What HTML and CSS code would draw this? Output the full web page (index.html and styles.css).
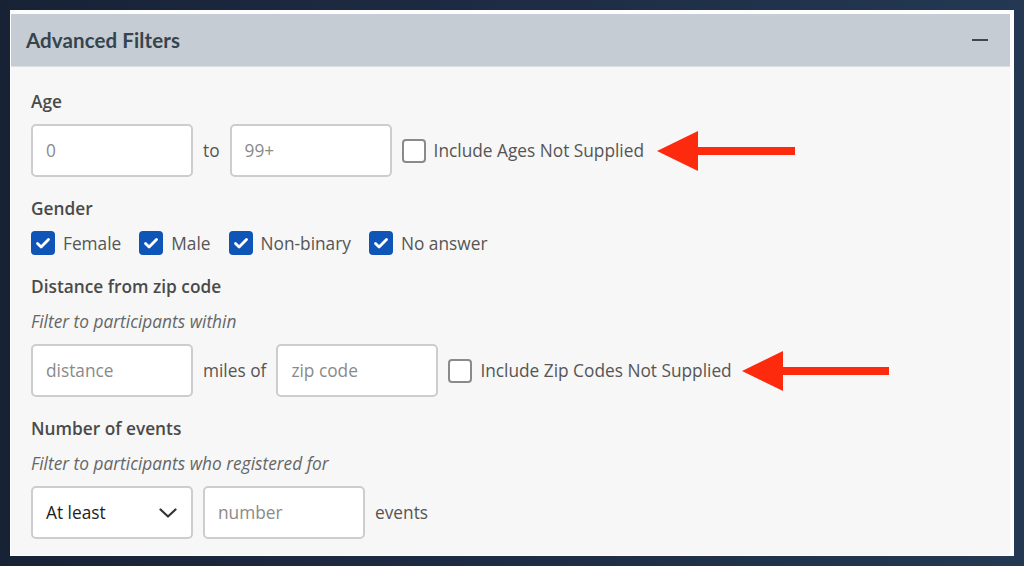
FILE: index.html
```html
<!DOCTYPE html>
<html lang="en">
<head>
  <meta charset="UTF-8">
  <title>Advanced Filters</title>
  <link rel="stylesheet" href="styles.css">
</head>
<body>
  <div class="frame">
    <div class="panel">
      <div class="panel-header">
        <h2>Advanced Filters</h2>
        <span class="collapse"></span>
      </div>
      <form class="filters">
        <div class="section">
          <div class="label">Age</div>
          <div class="row">
            <input class="field" type="text" placeholder="0">
            <span class="word">to</span>
            <input class="field" type="text" placeholder="99+">
            <label class="check">
              <span class="box"></span>
              Include Ages Not Supplied
            </label>
            <svg class="arrow" width="140" height="42" viewBox="0 0 140 42">
              <polygon points="0,21 41,1 41,41" />
              <rect x="40" y="17" width="98" height="8" />
            </svg>
          </div>
        </div>

        <div class="section">
          <div class="label">Gender</div>
          <div class="row checks">
            <label class="check"><span class="box on"><svg viewBox="0 0 24 24"><path d="M6.5 12.5l3.6 3.6 7.4-7.6" /></svg></span>Female</label>
            <label class="check"><span class="box on"><svg viewBox="0 0 24 24"><path d="M6.5 12.5l3.6 3.6 7.4-7.6" /></svg></span>Male</label>
            <label class="check"><span class="box on"><svg viewBox="0 0 24 24"><path d="M6.5 12.5l3.6 3.6 7.4-7.6" /></svg></span>Non-binary</label>
            <label class="check"><span class="box on"><svg viewBox="0 0 24 24"><path d="M6.5 12.5l3.6 3.6 7.4-7.6" /></svg></span>No answer</label>
          </div>
        </div>

        <div class="section">
          <div class="label">Distance from zip code</div>
          <div class="hint">Filter to participants within</div>
          <div class="row">
            <input class="field" type="text" placeholder="distance">
            <span class="word">miles of</span>
            <input class="field" type="text" placeholder="zip code">
            <label class="check">
              <span class="box"></span>
              Include Zip Codes Not Supplied
            </label>
            <svg class="arrow arrow-zip" width="150" height="42" viewBox="0 0 150 42">
              <polygon points="0,21 41,1 41,41" />
              <rect x="40" y="17" width="107" height="8" />
            </svg>
          </div>
        </div>

        <div class="section">
          <div class="label">Number of events</div>
          <div class="hint">Filter to participants who registered for</div>
          <div class="row">
            <div class="field select">
              <span>At least</span>
              <svg width="18" height="10" viewBox="0 0 18 10"><path d="M1.5 1.5l7.5 7 7.5-7" /></svg>
            </div>
            <input class="field" type="text" placeholder="number">
            <span class="word">events</span>
          </div>
        </div>
      </form>
    </div>
  </div>
</body>
</html>
```

FILE: styles.css
```css
body {
  margin: 0;
  padding: 10px;
  height: 566px;
  box-sizing: border-box;
  background: linear-gradient(90deg, #182235 0%, #1e2d45 55%, #243853 100%);
  font-family: 'Open Sans', sans-serif;
  overflow: hidden;
}

.frame {
  background-color: #fdfdfd;
  padding: 4px 4px 1px 1px;
  height: 546px;
  box-sizing: border-box;
}

.panel {
  height: 100%;
  background-color: #f7f7f7;
  display: flex;
  flex-direction: column;
}

.panel-header {
  height: 52px;
  background-color: #c5ccd3;
  border-bottom: 1px solid #dbe0e4;
  display: flex;
  align-items: center;
  justify-content: space-between;
  padding: 0 22px 0 15px;
  flex-shrink: 0;
}

.panel-header h2 {
  margin: 0;
  font-family: 'Lato', sans-serif;
  font-size: 20.5px;
  font-weight: 700;
  color: #36444f;
  letter-spacing: 0.1px;
}

.collapse {
  width: 16px;
  height: 2px;
  background-color: #3a4952;
  margin-top: -1px;
}

.filters {
  padding: 23px 20px 0;
  display: flex;
  flex-direction: column;
  gap: 20px;
}

.section {
  display: flex;
  flex-direction: column;
  gap: 10px;
}

.label {
  font-size: 17.3px;
  font-weight: 600;
  color: #4a4a4a;
  line-height: 24px;
}

.hint {
  font-size: 17.3px;
  font-style: italic;
  color: #666;
  line-height: 24px;
  margin-top: 1px;
}

.row {
  display: flex;
  align-items: center;
  gap: 10px;
}

.field {
  width: 162px;
  height: 53px;
  box-sizing: border-box;
  border: 2px solid #cdcdcd;
  border-radius: 5px;
  background-color: #fff;
  padding: 0 13px;
  font-family: 'Open Sans', sans-serif;
  font-size: 17.3px;
  color: #222;
  outline: none;
}

.field::placeholder {
  color: #8a8a8a;
}

.select {
  display: flex;
  align-items: center;
  justify-content: space-between;
  padding-right: 14px;
}

.select span {
  color: #1e1e1e;
}

.select svg path {
  fill: none;
  stroke: #333;
  stroke-width: 2.2;
  stroke-linecap: round;
  stroke-linejoin: round;
}

.word {
  font-size: 17.3px;
  color: #555;
}

.check {
  display: flex;
  align-items: center;
  gap: 8px;
  font-size: 17.3px;
  color: #555;
}

.box {
  width: 24px;
  height: 24px;
  box-sizing: border-box;
  border: 2px solid #8a8a8a;
  border-radius: 4px;
  background-color: #fff;
  flex-shrink: 0;
}

.box.on {
  border: none;
  background-color: #0f55b7;
}

.box svg {
  display: block;
  width: 24px;
  height: 24px;
}

.box svg path {
  fill: none;
  stroke: #fff;
  stroke-width: 2.8;
  stroke-linecap: round;
  stroke-linejoin: round;
}

.checks {
  gap: 18px;
  height: 24px;
}

.arrow {
  fill: #fd2a0e;
  margin-left: 3px;
}

.arrow-zip {
  margin-left: 0;
}
```
